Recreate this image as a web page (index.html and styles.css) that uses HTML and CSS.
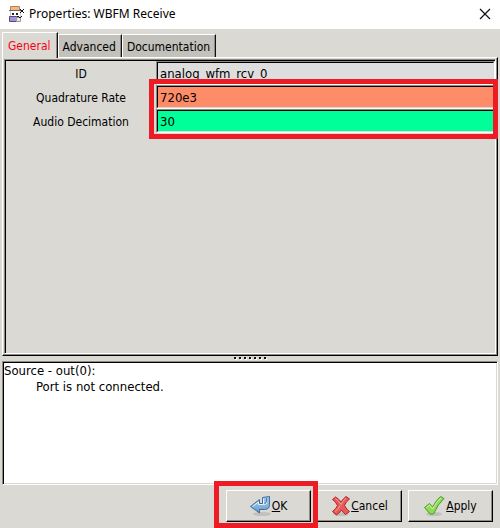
FILE: index.html
```
<!DOCTYPE html>
<html lang="en">
<head>
<meta charset="utf-8">
<title>Properties: WBFM Receive</title>
<link rel="stylesheet" href="styles.css">
</head>
<body>
<header class="titlebar">
  <svg class="app-icon" width="18" height="18" viewBox="0 0 18 18" aria-hidden="true">
    <path d="M2.500 5.500h10v7h-10z" fill="#fff" stroke="#d0cbc8"/>
    <path d="M2.500 1.500h9v4h-9z" fill="#f0b884" stroke="#b98453"/>
    <path d="M1 5.500h12" stroke="#75645c"/>
    <path d="M4 8h2v2H4zM8 8h2v2H8z" fill="#222"/>
    <path d="M1.500 11.500h7v5h-7z" fill="#a58fe0" stroke="#55506a"/>
    <path d="M8.500 12.500h4v4h-4z" fill="#efe9e6" stroke="#a09896"/>
    <path d="M12 4h1v1h-1zM15 4h1v1h-1zM13 5h2v2h-2zM12 7h1v1h-1zM15 7h1v1h-1zM9 11h2v1H9zM11 12h2v1h-2zM13 11h1v1h-1z" fill="#111"/>
  </svg>
  <h1 class="title">Properties: WBFM Receive</h1>
  <button class="close" type="button" aria-label="Close">
    <svg width="12" height="12" viewBox="0 0 12 12"><path d="M1 1l10 10M11 1L1 11" stroke="#111" stroke-width="1.2"/></svg>
  </button>
</header>
<main class="dialog">
  <div class="tabs" role="tablist">
    <button class="tab selected" type="button" role="tab" aria-selected="true">General</button>
    <button class="tab" type="button" role="tab" aria-selected="false">Advanced</button>
    <button class="tab" type="button" role="tab" aria-selected="false">Documentation</button>
  </div>
  <section class="page">
    <form class="fields">
      <label for="id">ID</label>
      <div class="entry"><input id="id" class="plain" type="text" value="analog_wfm_rcv_0"></div>
      <label for="rate">Quadrature Rate</label>
      <div class="entry"><input id="rate" class="orange" type="text" value="720e3"></div>
      <label for="decim">Audio Decimation</label>
      <div class="entry"><input id="decim" class="green" type="text" value="30">
        <span class="mark mark-fields"></span>
      </div>
    </form>
  </section>
  <div class="grip"><svg width="33" height="3" viewBox="0 0 33 3" aria-hidden="true"><path d="M1 2h32" stroke="#fff" stroke-width="2" stroke-dasharray="2 3"/><path d="M0 1h33" stroke="#111" stroke-width="2" stroke-dasharray="2 3"/></svg></div>
  <section class="messages">
    <p>Source - out(0):</p>
    <p class="detail">Port is not connected.</p>
  </section>
  <footer class="actions">
    <div class="ok-wrap">
      <button class="action" type="button">
        <svg width="22" height="22" viewBox="0 0 22 22" aria-hidden="true">
          <defs><linearGradient id="blue" x2="0" y2="1"><stop offset="0" stop-color="#a5c8ec"/><stop offset=".5" stop-color="#8fb8e0"/><stop offset="1" stop-color="#5f93c8"/></linearGradient></defs>
          <ellipse cx="12" cy="19" rx="9" ry="2" fill="#777" opacity=".25"/>
          <path d="M12.500 2.500L19.500 1.500V9.500q0 5-5 5H9.500V18L.500 11.500 9.500 4.500V8.500h3z" fill="url(#blue)" stroke="#3d6e9f" stroke-linejoin="round"/>
          <path d="M13.500 3.500v5.500M2.500 11.500L8.500 7v2.500h5q2 0 3-1V3" fill="none" stroke="#e4f0fc"/>
          <path d="M14.500 8.500q2-.5 2-2.500V3" fill="none" stroke="#477aad"/>
        </svg><span><u>O</u>K</span>
      </button>
      <span class="mark mark-ok"></span>
    </div>
    <button class="action" type="button">
      <svg width="20" height="22" viewBox="0 0 20 22" aria-hidden="true">
        <ellipse cx="10" cy="19" rx="8" ry="2" fill="#777" opacity=".25"/>
        <path d="M4.500 2Q8 4 10 7q2-3 5-5.500l3.500 2.500q-4 3-5 6.500 2 4 5 6L14.500 19.500q-2.500-2-4-4.500-2 3-5 5L1.500 16.500q4-3 5-6Q5 7 1.500 4.500z" fill="#e35b5b" stroke="#b82020" stroke-linejoin="round"/>
        <path d="M4.500 3.500Q8 6 10 9.500 12 6 15 3M4 16.500q4-3 5-6" fill="none" stroke="#f4a0a0"/>
      </svg><span><u>C</u>ancel</span>
    </button>
    <button class="action" type="button">
      <svg width="22" height="22" viewBox="0 0 22 22" aria-hidden="true">
        <ellipse cx="10" cy="19" rx="8" ry="2" fill="#777" opacity=".25"/>
        <path d="M.500 12.500l5-4 3 3.500Q12 5.500 16.500 1.500l3.500 2Q13.500 9.500 9.500 19H6z" fill="#8edb58" stroke="#4a9b22" stroke-linejoin="round"/>
        <path d="M2.500 12.500l3-2.500 3 4Q12 7 17 3" fill="none" stroke="#cbf4ab"/>
      </svg><span><u>A</u>pply</span>
    </button>
  </footer>
</main>
</body>
</html>
```
FILE: styles.css
```
* { box-sizing: border-box; }

body {
  margin: 0;
  min-height: 100vh;
  display: flex;
  flex-direction: column;
  background: #dad9d4;
  color: #000;
  font: 12px/16px "DejaVu Sans Condensed", "DejaVu Sans", sans-serif;
}

button, input { font: inherit; color: inherit; }
p { margin: 0; }

.titlebar {
  display: flex;
  align-items: center;
  height: 29px;
  padding: 0 9px 2px 8px;
  background: #fff;
}
.title {
  flex: 1;
  margin: 0 0 0 3px;
  font: 12px/16px "Noto Sans", sans-serif;
}
.close {
  display: flex;
  padding: 0;
  border: 0;
  background: none;
}

.dialog {
  flex: 1;
  display: flex;
  flex-direction: column;
  padding: 3px 2px 6px;
}

.tabs { display: flex; align-items: flex-end; }
.tab {
  height: 23px;
  padding: 1px 5px 0 4px;
  border: solid;
  border-width: 1px 1px 0 1px;
  border-color: #fff #111 #fff #fff;
  box-shadow: inset -1px 0 #8f8c84;
  background: #c2c1bb;
}
.tab.selected {
  height: 26px;
  margin-bottom: -1px;
  padding: 0 6px 0 5px;
  background: #dad9d4;
  color: #ff0010;
  z-index: 1;
}

.page {
  flex: 1;
  display: flex;
  padding: 1px;
  border: 1px solid;
  border-color: #fff #000 #000 #fff;
  box-shadow: inset -1px -1px #8f8c84;
}
.fields {
  flex: 1;
  display: grid;
  grid-template-columns: 150px 1fr;
  grid-auto-rows: 24px;
  align-content: start;
  align-items: center;
  border: 1px solid;
  border-color: #8f8c84 #fff #fff #8f8c84;
  box-shadow: inset 1px 1px #000;
  padding: 1px 0 0 1px;
}
.fields label { padding-top: 1px; text-align: center; }
.entry {
  position: relative;
  height: 24px;
  border: 1px solid;
  border-color: #8f8c84 #fff #fff #8f8c84;
}
.entry input {
  display: block;
  width: 100%;
  height: 22px;
  padding: 0 2px;
  border: 1px solid;
  border-color: #000 #dad9d4 #dad9d4 #000;
  border-radius: 0;
  outline: 0;
  font-size: 13px;
}
.plain { background: #dedede; }
.orange { background: #ff8c69; }
.green { background: #00ff99; }

.mark {
  position: absolute;
  border: 5px solid #ed1c24;
  pointer-events: none;
}
.mark-fields { inset: -31px -4px -7px -8px; }
.mark-ok { inset: -9px -7px -6px -12px; }

.grip {
  display: flex;
  justify-content: center;
  align-items: center;
  height: 5px;
}

.messages {
  height: 124px;
  padding: 1px;
  border: 1px solid;
  border-color: #8f8c84 #fff #fff #8f8c84;
  box-shadow: inset 1px 1px #000, inset -1px -1px #dad9d4;
  background: #fff;
  font-size: 13px;
}
.detail { padding-left: 32px; }

.actions {
  display: flex;
  justify-content: flex-end;
  gap: 6px;
  padding: 5px 5px 0 0;
}
.ok-wrap { position: relative; }
.action {
  display: flex;
  align-items: center;
  justify-content: center;
  width: 85px;
  height: 32px;
  padding: 0;
  border: 1px solid;
  border-color: #fff #000 #000 #fff;
  box-shadow: inset -1px -1px #8f8c84;
  background: #dad9d4;
}
```
